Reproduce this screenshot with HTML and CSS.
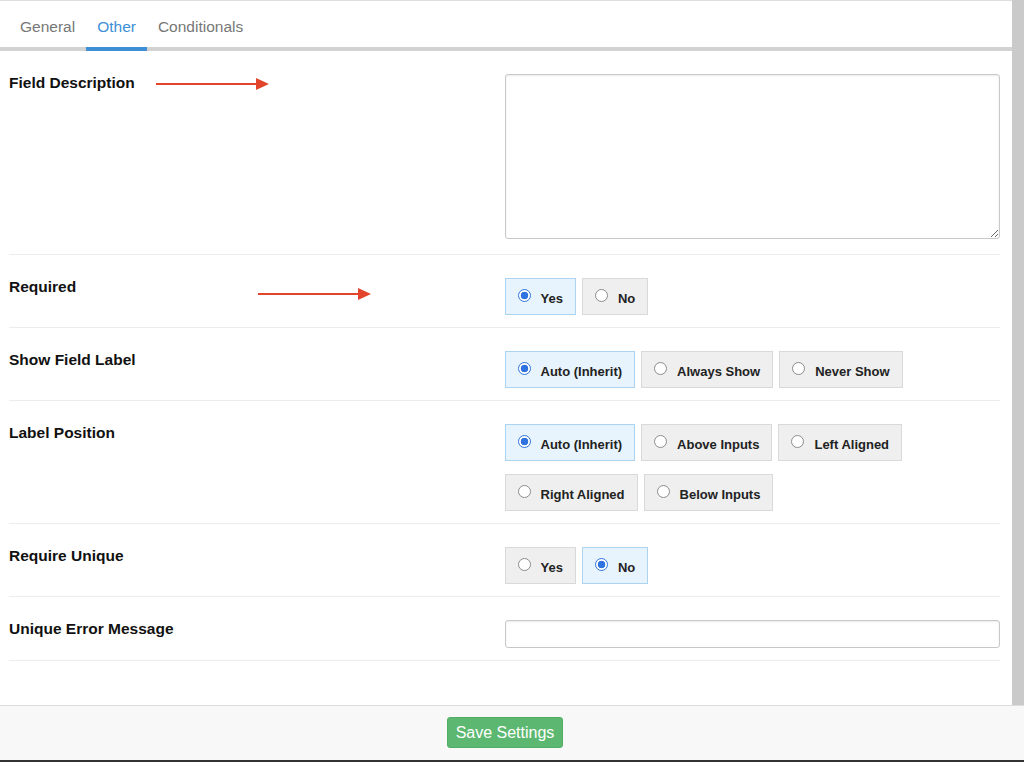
FILE: index.html
```html
<!DOCTYPE html>
<html lang="en">
<head>
    <meta charset="UTF-8">
    <meta name="viewport" content="width=device-width, initial-scale=1.0">
    <title>Field Settings</title>
    <link rel="stylesheet" href="styles.css">
</head>
<body>

<div class="page">
    <div class="main">
        <div class="panel">
            <div class="tabs">
                <a class="tab" href="#">General</a>
                <a class="tab active" href="#">Other</a>
                <a class="tab" href="#">Conditionals</a>
            </div>

            <form class="settings">
                <div class="row">
                    <div class="label">Field Description</div>
                    <div class="control">
                        <textarea class="desc"></textarea>
                    </div>
                    <svg class="arrow arrow-1" width="116" height="14" viewBox="0 0 116 14">
                        <line x1="0" y1="7" x2="104" y2="7" stroke="#e2452b" stroke-width="2"/>
                        <polygon points="100,1 113,7 100,13" fill="#e2452b"/>
                    </svg>
                </div>

                <div class="row">
                    <div class="label">Required</div>
                    <div class="control options">
                        <label class="opt on"><input type="radio" name="req" checked> Yes</label>
                        <label class="opt"><input type="radio" name="req"> No</label>
                    </div>
                    <svg class="arrow arrow-2" width="116" height="14" viewBox="0 0 116 14">
                        <line x1="0" y1="7" x2="104" y2="7" stroke="#e2452b" stroke-width="2"/>
                        <polygon points="100,1 113,7 100,13" fill="#e2452b"/>
                    </svg>
                </div>

                <div class="row">
                    <div class="label">Show Field Label</div>
                    <div class="control options">
                        <label class="opt on"><input type="radio" name="show" checked> Auto (Inherit)</label>
                        <label class="opt"><input type="radio" name="show"> Always Show</label>
                        <label class="opt"><input type="radio" name="show"> Never Show</label>
                    </div>
                </div>

                <div class="row">
                    <div class="label">Label Position</div>
                    <div class="control options">
                        <label class="opt on"><input type="radio" name="pos" checked> Auto (Inherit)</label>
                        <label class="opt"><input type="radio" name="pos"> Above Inputs</label>
                        <label class="opt"><input type="radio" name="pos"> Left Aligned</label>
                        <label class="opt"><input type="radio" name="pos"> Right Aligned</label>
                        <label class="opt"><input type="radio" name="pos"> Below Inputs</label>
                    </div>
                </div>

                <div class="row">
                    <div class="label">Require Unique</div>
                    <div class="control options">
                        <label class="opt"><input type="radio" name="uniq"> Yes</label>
                        <label class="opt on"><input type="radio" name="uniq" checked> No</label>
                    </div>
                </div>

                <div class="row">
                    <div class="label">Unique Error Message</div>
                    <div class="control">
                        <input type="text" class="text">
                    </div>
                </div>
            </form>
        </div>
        <div class="strip"></div>
    </div>

    <div class="footer">
        <button type="button" class="save">Save Settings</button>
    </div>
</div>

</body>
</html>
```

FILE: styles.css
```css
* {
    box-sizing: border-box;
}
body {
    margin: 0;
    font-family: "Liberation Sans", Arial, sans-serif;
    background-color: #fff;
}
.page {
    height: 762px;
    display: flex;
    flex-direction: column;
}
.main {
    flex: 1;
    display: flex;
}
.panel {
    width: 1012px;
    border-top: 1px solid #ddd;
}
.strip {
    flex: 1;
    background-color: #cacaca;
}
.tabs {
    display: flex;
    padding-left: 9px;
    border-bottom: 4px solid #d2d2d2;
    height: 50px;
}
.tab {
    display: block;
    padding: 5px 11px 0;
    line-height: 42px;
    height: 50px;
    font-size: 15.5px;
    color: #777;
    text-decoration: none;
}
.tab.active {
    color: #3d8fd6;
    border-bottom: 4px solid #3d8fd6;
}
.settings {
    padding: 0 12px 0 9px;
}
.row {
    position: relative;
    display: grid;
    grid-template-columns: 1fr 1fr;
    padding: 23px 0 12px;
    border-bottom: 1px solid #ececec;
}
.label {
    font-size: 15.5px;
    font-weight: bold;
    line-height: 18px;
    color: #111;
}
.desc {
    display: block;
    width: 100%;
    height: 165px;
    margin-bottom: 3px;
    border: 1px solid #c8c8c8;
    border-radius: 3px;
    box-shadow: inset 0 1px 2px rgba(0, 0, 0, 0.08);
}
.text {
    display: block;
    width: 100%;
    height: 28px;
    border: 1px solid #c8c8c8;
    border-radius: 3px;
    box-shadow: inset 0 1px 2px rgba(0, 0, 0, 0.08);
}
.options {
    display: flex;
    flex-wrap: wrap;
    column-gap: 6px;
    row-gap: 13px;
    align-content: flex-start;
}
.opt {
    display: flex;
    align-items: center;
    gap: 10px;
    height: 37px;
    padding: 3px 12px 0;
    background-color: #efefef;
    border: 1px solid #d9d9d9;
    font-size: 13px;
    font-weight: bold;
    color: #222;
}
.opt.on {
    background-color: #e8f4fd;
    border-color: #acd4f0;
}
.opt input {
    appearance: none;
    -webkit-appearance: none;
    width: 13px;
    height: 13px;
    margin: -5px 0 0;
    border: 1px solid #8c8c8c;
    border-radius: 50%;
    background-color: #fff;
}
.opt input:checked {
    border-color: #2f73e0;
    background: radial-gradient(circle, #2f73e0 0, #2f73e0 3.5px, #fff 4.1px);
}
.arrow {
    position: absolute;
}
.arrow-1 {
    left: 147px;
    top: 26px;
}
.arrow-2 {
    left: 249px;
    top: 32px;
}
.footer {
    height: 57px;
    background-color: #f8f8f8;
    border-top: 1px solid #dcdcdc;
    border-bottom: 2px solid #333;
    padding: 11px 14px 0 0;
    text-align: center;
}
.save {
    height: 31px;
    padding: 0 8px;
    font-family: "Liberation Sans", Arial, sans-serif;
    font-size: 16px;
    color: #fff;
    background-color: #5cb870;
    border: 1px solid #52ad66;
    border-radius: 3px;
}
```
